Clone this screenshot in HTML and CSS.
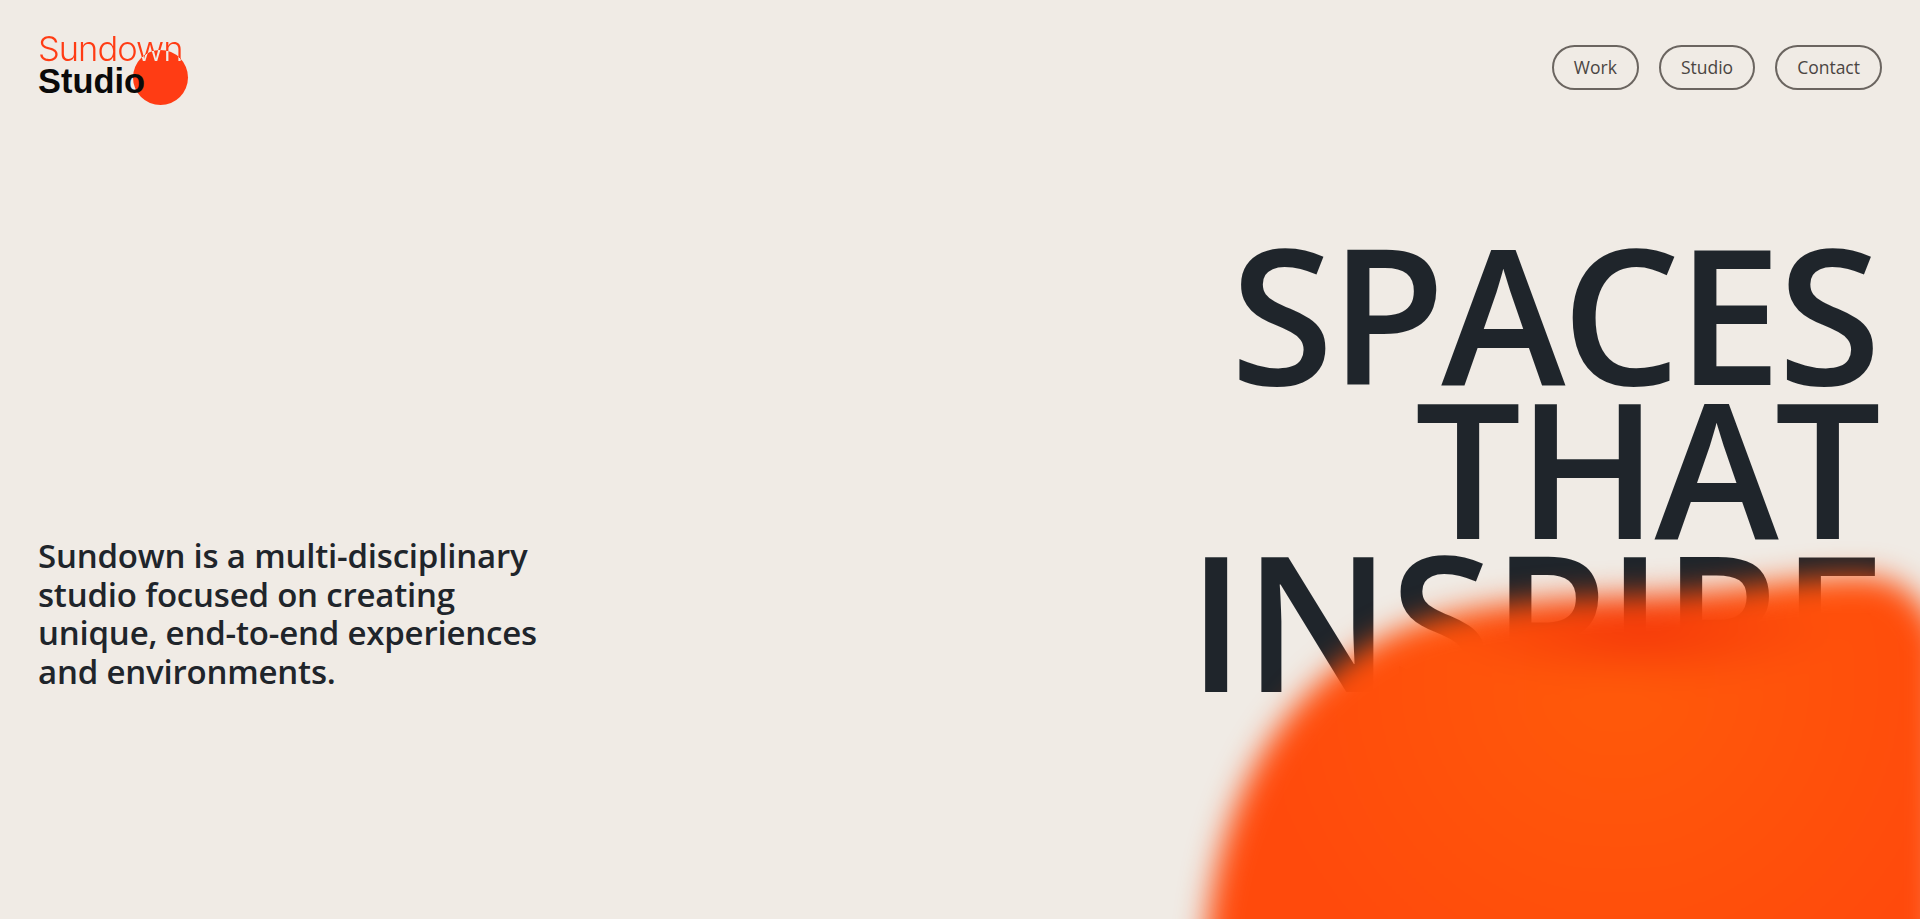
FILE: index.html
```html
<!DOCTYPE html>
<html lang="en">
<head>
    <meta charset="utf-8">
    <title>Sundown Studio</title>
    <meta name="viewport" content="width=device-width, initial-scale=1">
    <link rel="stylesheet" href="styles.css">
</head>
<body>
<div class="page">

<header>
    <a class="logo" href="#">
        <span class="logo-sun"></span>
        <span class="logo-top">Sundown</span>
        <span class="logo-bottom">Studio</span>
    </a>
    <nav>
        <a href="#">Work</a>
        <a href="#">Studio</a>
        <a href="#">Contact</a>
    </nav>
</header>

<main>
    <p class="intro">Sundown is a multi-disciplinary<br>studio focused on creating<br>unique, end-to-end experiences<br>and environments.</p>
    <h1>SPACES<br>THAT<br><span class="wide">INSPIRE</span></h1>
</main>

<div class="blob"><div class="blob-shape"></div></div>

</div>
</body>
</html>
```

FILE: styles.css
```css
:root {
    --bg: #f0ebe5;
    --ink: #1f252b;
    --sun: #ff3c14;
}

body {
    margin: 0;

    font-family: "Open Sans", "Noto Sans", sans-serif;
    color: var(--ink);
    background: var(--bg);
}

a {
    text-decoration: none;
    color: inherit;
}

.page {
    position: relative;
    height: 919px;
    overflow: hidden;
}

header {
    display: flex;
    justify-content: space-between;
    align-items: flex-start;
    padding: 32px 38px 0 38px;
}

.logo {
    position: relative;
    display: flex;
    flex-direction: column;
    width: 150px;
    line-height: 33px;
}

.logo-sun {
    position: absolute;
    left: 95px;
    top: 18px;
    width: 55px;
    height: 55px;
    border-radius: 50%;
    background: var(--sun);
}

.logo-top {
    position: relative;
    font-family: Inter, "Liberation Sans", sans-serif;
    font-size: 34.5px;
    font-weight: 300;
    letter-spacing: -1px;
    color: transparent;
    background: radial-gradient(circle 27.5px at 122.5px 45.5px, var(--bg) 99%, var(--sun) 100%);
    -webkit-background-clip: text;
    background-clip: text;
}

.logo-bottom {
    position: relative;
    font-family: "Liberation Sans", sans-serif;
    font-size: 34.4px;
    font-weight: bold;
    color: #0a0a0a;
}

nav {
    display: flex;
    gap: 20px;
    margin-top: 13px;
}

nav a {
    padding: 0 20px;
    line-height: 41px;
    font-size: 17.5px;
    color: #4a4542;
    border: 2px solid #6b6560;
    border-radius: 24px;
}

main {
    display: flex;
    justify-content: space-between;
    align-items: flex-start;
    padding: 138px 43px 0 38px;
}

.intro {
    margin: 301px 0 0;
    font-size: 33px;
    font-weight: 600;
    letter-spacing: -0.2px;
    line-height: 38.7px;
}

h1 {
    margin: 0;
    font-size: 188px;
    font-weight: 600;
    letter-spacing: -4px;
    line-height: 153.6px;
    text-align: right;
}

.wide {
    margin-right: -8px;
    letter-spacing: -1.2px;
}

/* the wrapper blurs, the child carries the outline */
.blob {
    position: absolute;
    left: 1180px;
    top: 560px;
    width: 780px;
    height: 400px;
    filter: blur(15px);
}

.blob-shape {
    width: 100%;
    height: 100%;
    clip-path: path("M25 400 C30 270 85 130 220 70 C290 42 380 38 470 35 C560 32 620 15 690 17 C720 18 745 40 760 80 L760 400 Z");
    background:
        radial-gradient(ellipse 200px 55px at 460px 70px, #f5380a, transparent),
        radial-gradient(circle at 56% 30%, #ff5a0a 0, #ff4a0c 70%);
}
```
